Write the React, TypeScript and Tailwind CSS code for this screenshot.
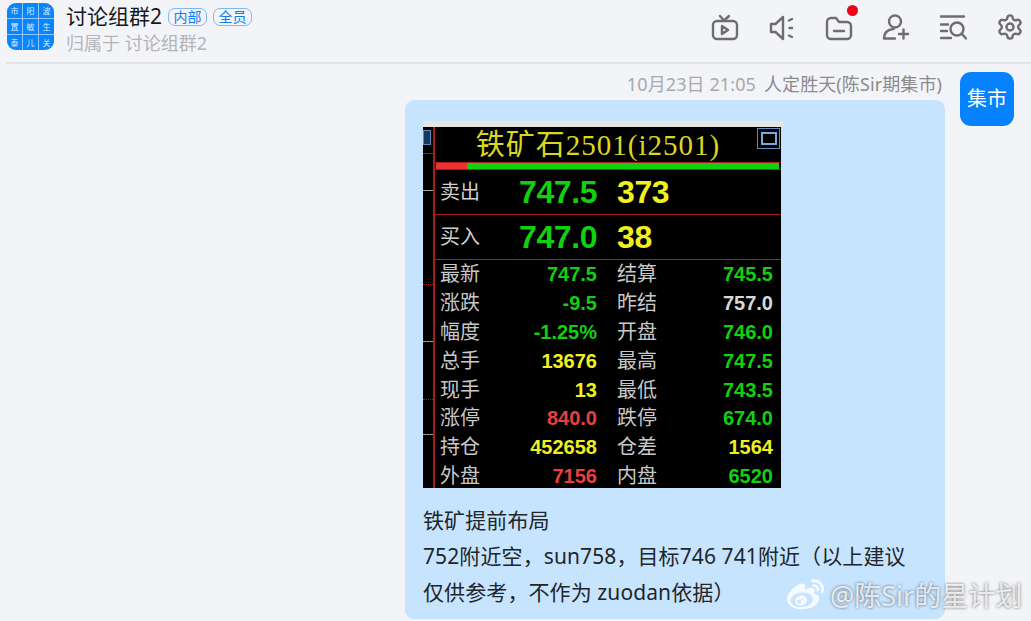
import { Settings } from 'lucide-react';
import { FaWeibo } from 'react-icons/fa';

const FONT = '[font-family:"Noto_Sans","Noto_Sans_CJK_SC",sans-serif]';

const logoCells = ['市', '阳', '波', '置', '敏', '生', '泰', '儿', '关'];

const quoteRows = [
  { l: '最新', v: '747.5', vc: 'text-[#10d010]', r: '结算', w: '745.5', wc: 'text-[#10d010]' },
  { l: '涨跌', v: '-9.5', vc: 'text-[#10d010]', r: '昨结', w: '757.0', wc: 'text-[#d8d8d8]' },
  { l: '幅度', v: '-1.25%', vc: 'text-[#10d010]', r: '开盘', w: '746.0', wc: 'text-[#10d010]' },
  { l: '总手', v: '13676', vc: 'text-[#f0f020]', r: '最高', w: '747.5', wc: 'text-[#10d010]' },
  { l: '现手', v: '13', vc: 'text-[#f0f020]', r: '最低', w: '743.5', wc: 'text-[#10d010]' },
  { l: '涨停', v: '840.0', vc: 'text-[#e84040]', r: '跌停', w: '674.0', wc: 'text-[#10d010]' },
  { l: '持仓', v: '452658', vc: 'text-[#f0f020]', r: '仓差', w: '1564', wc: 'text-[#f0f020]' },
  { l: '外盘', v: '7156', vc: 'text-[#e84040]', r: '内盘', w: '6520', wc: 'text-[#10d010]' },
];

function Icon({ children }: { children: React.ReactNode }) {
  return (
    <svg width="28" height="28" viewBox="0 0 28 28" fill="none" stroke="#6e6e6e" strokeWidth="2.4" strokeLinecap="round" strokeLinejoin="round">
      {children}
    </svg>
  );
}

function Tag({ text }: { text: string }) {
  return (
    <span className="flex h-[18px] w-[39px] items-center justify-center rounded-[7px] border border-[#7db8f5] text-[14px] leading-none text-[#0a7ff0]">
      {text}
    </span>
  );
}

function HeaderIcons() {
  return (
    <div className="flex items-center gap-[29px]">
      <Icon>
        <path d="M9 3l4 4.500L18 3" />
        <rect x="2" y="8" width="24" height="18" rx="4" />
        <path d="M11 13l6 4-6 4z" />
      </Icon>
      <Icon>
        <path d="M3 11v8h4.500L15 26V4L7.500 11z" />
        <path d="M21 7.500l3-1.500M21.500 15h2.500M21 22.500l3 1.500" />
      </Icon>
      <div className="relative">
        <Icon>
          <path d="M2 9a4 4 0 0 1 4-4h5l3 4h8a4 4 0 0 1 4 4v9a4 4 0 0 1-4 4H6a4 4 0 0 1-4-4z" />
          <path d="M9 18h10" />
        </Icon>
        <span className="absolute -right-[5px] -top-[8px] size-[11px] rounded-full bg-[#f00016]" />
      </div>
      <Icon>
        <circle cx="13" cy="8.500" r="6" />
        <path d="M2 25.500c0-6 4-9 9.500-9.500M17 21h9M21.500 16.500v9M2 25.500h11" />
      </Icon>
      <Icon>
        <path d="M2 3.500h23M2 11.500h7M2 18h6M2 25h10" />
        <circle cx="18" cy="16" r="6.500" />
        <path d="M23 21l4 4.500" />
      </Icon>
      <Settings size={28} strokeWidth={2.1} color="#6e6e6e" />
    </div>
  );
}

function QuotePanel() {
  return (
    <div className="flex h-[367px] w-[360px] flex-col overflow-hidden font-['Liberation_Sans','Noto_Sans_CJK_SC',sans-serif]">
      <div className="h-[6px] shrink-0 bg-[#e6e4e2]" />
      <div className="flex min-h-0 w-[358px] flex-1 bg-black">
        {/* left strip of the cropped chart */}
        <div className="relative flex w-[10px] shrink-0 flex-col">
          <div className="mt-[3px] h-[15px] w-[8px] border border-[#5b8fc4] bg-[#16385a]" />
          <div className="mt-[8px] h-px w-[10px] bg-[#a01818]" />
          <div className="mt-[36px] h-px w-[10px] bg-[#a8a8a8]" />
          <span className="absolute top-[157px] left-0 h-px w-[10px] border-t border-dotted border-[#a01818]" />
          <span className="absolute top-[214px] left-0 h-px w-[10px] border-t border-dashed border-[#a8a8a8]" />
          <span className="absolute top-[272px] left-0 h-px w-[10px] border-t border-dotted border-[#a01818]" />
          <span className="absolute top-[307px] left-0 h-px w-[10px] border-t border-dashed border-[#a8a8a8]" />
        </div>
        <div className="flex min-w-0 flex-1 flex-col border-l-2 border-[#a81c1c]">
          <div className="relative flex h-[35px] shrink-0 items-center justify-center pr-[20px] pt-[2px] font-['Liberation_Serif','Noto_Sans_CJK_SC',serif] text-[29px] leading-none tracking-[1px] text-[#d8d820]">
            铁矿石2501(i2501)
            <span className="absolute right-[1px] top-[1px] flex h-[21px] w-[23px] items-center justify-center border border-[#5b8fc4]">
              <span className="h-[13px] w-[16px] border-2 border-[#7aa8d8]" />
            </span>
          </div>
          <div className="flex h-[8px] shrink-0 border-y border-[#a81c1c] pl-[1px] pr-[2px]">
            <div className="w-[31px] bg-[#f03030]" />
            <div className="flex-1 bg-[#10d010]" />
          </div>
          <div className="flex h-[45px] shrink-0 items-center border-b border-[#a81c1c] pl-[5px]">
            <span className="w-[79px] text-[20px] text-[#cfcfcf]">卖出</span>
            <span className="w-[98px] text-[32px] leading-none font-bold tracking-[-0.4px] text-[#10d010]">747.5</span>
            <span className="text-[32px] leading-none font-bold tracking-[-0.4px] text-[#f0f020]">373</span>
          </div>
          <div className="flex h-[45px] shrink-0 items-center border-b border-[#a81c1c] pl-[5px]">
            <span className="w-[79px] text-[20px] text-[#cfcfcf]">买入</span>
            <span className="w-[98px] text-[32px] leading-none font-bold tracking-[-0.4px] text-[#10d010]">747.0</span>
            <span className="text-[32px] leading-none font-bold tracking-[-0.4px] text-[#f0f020]">38</span>
          </div>
          <div className="flex flex-col pr-[8px] pl-[5px]">
            {quoteRows.map((row) => (
              <div key={row.l} className="flex h-[28.8px] shrink-0 items-center text-[20px] leading-none">
                <span className="w-[40px] text-[#c8c8c8]">{row.l}</span>
                <span className={`flex-1 text-right text-[20px] font-bold ${row.vc}`}>{row.v}</span>
                <span className="ml-[20px] w-[40px] text-[#c8c8c8]">{row.r}</span>
                <span className={`w-[116px] text-right text-[20px] font-bold ${row.wc}`}>{row.w}</span>
              </div>
            ))}
          </div>
        </div>
      </div>
    </div>
  );
}

export default function App() {
  return (
    <div className={`relative h-[621px] w-[1031px] overflow-hidden bg-[#f3f4f7] ${FONT}`}>
      {/* Header */}
      <div className="ml-[6px] flex h-[64px] items-start justify-between border-b-2 border-[#e2e3e6] pl-[1px] pr-[7px] pt-[3px]">
        <div className="flex gap-[12px]">
          <div className="grid size-[47px] grid-cols-3 gap-px overflow-hidden rounded-[9px] bg-[#8cc8ff]">
            {logoCells.map((c) => (
              <span key={c} className="flex items-center justify-center bg-[#0a86fa] text-[8px] leading-none text-[#d8ecff]">
                {c}
              </span>
            ))}
          </div>
          <div className="flex flex-col">
            <div className="flex h-[27px] items-center gap-[6px]">
              <span className="text-[21px] leading-none text-[#16181c]">讨论组群2</span>
              <Tag text="内部" />
              <Tag text="全员" />
            </div>
            <span className="mt-[1px] text-[18px] leading-[24px] text-[#b4b4ba]">归属于 讨论组群2</span>
          </div>
        </div>
        <div className="pt-[10px]">
          <HeaderIcons />
        </div>
      </div>

      {/* Message */}
      <div className="flex justify-end gap-[15px] pr-[17px] pt-[8px]">
        <div className="flex flex-col items-end">
          <div className="flex h-[28px] items-center gap-[8px] pb-[4px] pr-[3px] text-[18px] leading-none tracking-[0.1px]">
            <span className="text-[#a8a8ae]">10月23日 21:05</span>
            <span className="text-[#8a8a90]">人定胜天(陈Sir期集市)</span>
          </div>
          <div className="w-[540px] rounded-[9px] bg-[#c7e4fe] px-[18px] pb-[9px] pt-[21px]">
            <QuotePanel />
            <p className="mt-[14px] text-[21px] leading-[36px] tracking-[0.1px] text-[#22252a]">
              铁矿提前布局
              <br />
              752附近空，sun758，目标746 741附近（以上建议
              <br />
              仅供参考，不作为 zuodan依据）
            </p>
          </div>
        </div>
        <div className="flex size-[54px] shrink-0 items-center justify-center rounded-[11px] bg-[#0682fe] text-[20px] leading-none text-white">
          集市
        </div>
      </div>

      {/* Watermark */}
      <div className="absolute left-[787px] top-[577px] flex items-center gap-[6px] text-[27px] leading-none text-white/80 [text-shadow:0_0_3px_rgba(0,0,0,0.6)]">
        <FaWeibo size={37} />
        <span>@陈Sir的星计划</span>
      </div>
    </div>
  );
}
